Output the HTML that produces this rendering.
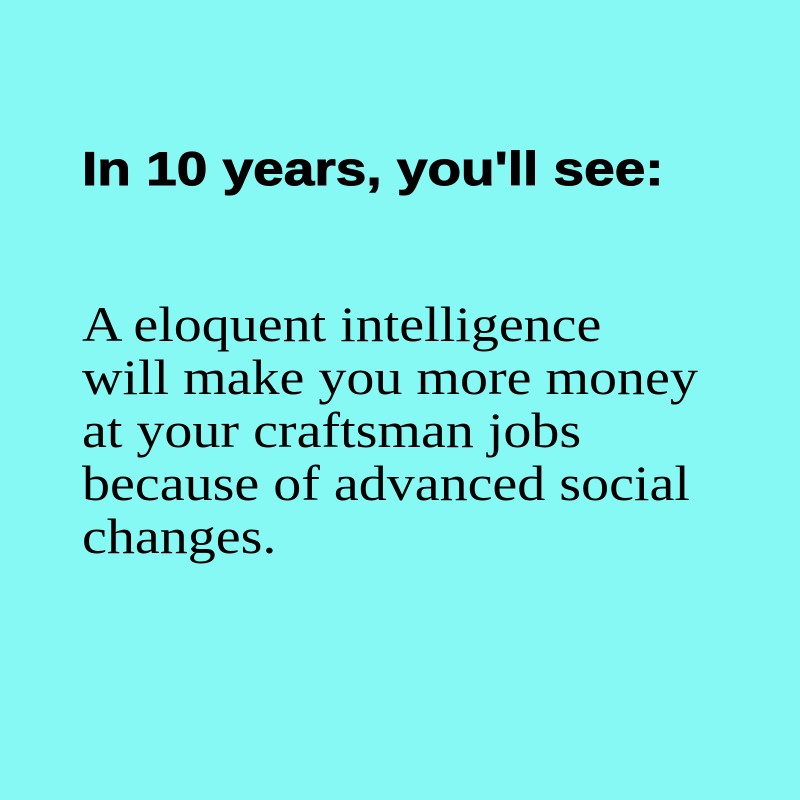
<!DOCTYPE html>
<html><head><style>
html,body{margin:0;padding:0;}
body{width:800px;height:800px;background:#86f9f4;position:relative;overflow:hidden;}
.h{position:absolute;left:82px;top:144px;font-family:"Liberation Sans",sans-serif;font-weight:bold;font-size:47px;color:#000;line-height:50px;white-space:nowrap;transform:scaleX(1.17);transform-origin:0 0;-webkit-text-stroke:1px #000;}
.b{position:absolute;left:82px;top:298px;font-family:"Liberation Serif",serif;font-size:50px;color:#000;line-height:53px;white-space:nowrap;transform:scaleX(1.12);transform-origin:0 0;}
</style></head><body>
<div class="h">In 10 years, you'll see:</div>
<div class="b">A eloquent intelligence<br>will make you more money<br>at your craftsman jobs<br>because of advanced social<br>changes.</div>
</body></html>
